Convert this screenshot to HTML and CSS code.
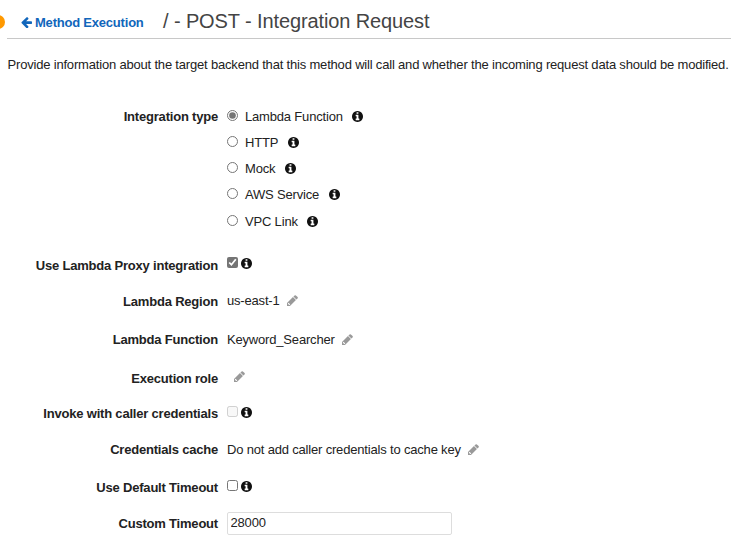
FILE: index.html
```html
<!DOCTYPE html>
<html lang="en">
<head>
<meta charset="utf-8">
<title>Integration Request</title>
<link rel="stylesheet" href="styles.css">
</head>
<body>
<svg class="defs" width="0" height="0">
  <symbol id="info" viewBox="128 128 1536 1536"><path d="M1152 1376v-160q0-14-9-23t-23-9h-96v-512q0-14-9-23t-23-9h-320q-14 0-23 9t-9 23v160q0 14 9 23t23 9h96v320h-96q-14 0-23 9t-9 23v160q0 14 9 23t23 9h448q14 0 23-9t9-23zm-128-896v-160q0-14-9-23t-23-9h-192q-14 0-23 9t-9 23v160q0 14 9 23t23 9h192q14 0 23-9t9-23zm640 416q0 209-103 385.5t-279.5 279.5-385.5 103-385.5-103-279.5-279.5-103-385.5 103-385.5 279.5-279.5 385.5-103 385.5 103 279.5 279.5 103 385.5z"/></symbol>
  <symbol id="pencil" viewBox="128 128 1536 1536"><path d="M491 1536l91-91-235-235-91 91v107h128v128h107zM960 416l416 416-832 832h-416v-416zm683 96q0 53-37 90l-166 166-416-416 166-165q36-38 90-38 53 0 91 38l235 234q37 39 37 91z"/></symbol>
  <symbol id="arrow" viewBox="128 192 1536 1480"><path d="M1664 896v128q0 53-32.5 90.5t-84.5 37.5h-704l293 294q38 36 38 90t-38 90l-75 76q-37 37-90 37-52 0-91-37l-651-652q-37-37-37-90 0-52 37-91l651-650q38-38 91-38 52 0 90 38l75 74q38 38 38 91t-38 91l-293 293h704q52 0 84.5 37.5t32.5 90.5z"/></symbol>
</svg>
<span class="dot"></span>
<header class="header">
  <a class="back"><svg class="arrow"><use href="#arrow"/></svg>Method Execution</a>
  <h1 class="title">/ - POST - Integration Request</h1>
</header>
<p class="intro">Provide information about the target backend that this method will call and whether the incoming request data should be modified.</p>
<form class="form">
  <div class="row row-type">
    <span class="label">Integration type</span>
    <div class="options">
      <label class="option"><input type="radio" name="type" checked><span>Lambda Function</span><svg class="info"><use href="#info"/></svg></label>
      <label class="option"><input type="radio" name="type"><span>HTTP</span><svg class="info"><use href="#info"/></svg></label>
      <label class="option"><input type="radio" name="type"><span>Mock</span><svg class="info"><use href="#info"/></svg></label>
      <label class="option"><input type="radio" name="type"><span>AWS Service</span><svg class="info"><use href="#info"/></svg></label>
      <label class="option option-last"><input type="radio" name="type"><span>VPC Link</span><svg class="info"><use href="#info"/></svg></label>
    </div>
  </div>
  <div class="row row-proxy">
    <span class="label">Use Lambda Proxy integration</span>
    <div class="value check"><input type="checkbox" checked><svg class="info"><use href="#info"/></svg></div>
  </div>
  <div class="row row-region">
    <span class="label">Lambda Region</span>
    <div class="value raised"><span>us-east-1</span><svg class="pencil"><use href="#pencil"/></svg></div>
  </div>
  <div class="row row-function">
    <span class="label">Lambda Function</span>
    <div class="value"><span>Keyword_Searcher</span><svg class="pencil"><use href="#pencil"/></svg></div>
  </div>
  <div class="row row-role">
    <span class="label">Execution role</span>
    <div class="value raised"><svg class="pencil"><use href="#pencil"/></svg></div>
  </div>
  <div class="row row-invoke">
    <span class="label">Invoke with caller credentials</span>
    <div class="value check"><input type="checkbox" disabled><svg class="info"><use href="#info"/></svg></div>
  </div>
  <div class="row row-cache">
    <span class="label">Credentials cache</span>
    <div class="value"><span>Do not add caller credentials to cache key</span><svg class="pencil"><use href="#pencil"/></svg></div>
  </div>
  <div class="row row-default">
    <span class="label">Use Default Timeout</span>
    <div class="value check"><input type="checkbox"><svg class="info"><use href="#info"/></svg></div>
  </div>
  <div class="row row-custom">
    <span class="label">Custom Timeout</span>
    <input class="text" type="text" value="28000">
  </div>
</form>
</body>
</html>
```
FILE: styles.css
```css
* { box-sizing: border-box; }
body {
  margin: 0;
  height: 549px;
  overflow: hidden;
  background: #fff;
  color: #222;
  font: 13px/18px "Liberation Sans", Arial, sans-serif;
  letter-spacing: -0.18px;
}
svg { fill: currentColor; flex: none; display: block; }
.defs { position: absolute; }
.dot {
  position: absolute;
  left: -9px;
  top: 15px;
  width: 14px;
  height: 14px;
  border-radius: 50%;
  background: #f90;
}
.header {
  display: flex;
  align-items: center;
  height: 39px;
  margin-left: 7px;
  padding-left: 14px;
  border-bottom: 1px solid #c8c8c8;
}
.back {
  display: flex;
  align-items: center;
  gap: 3px;
  width: 142px;
  padding-top: 7px;
  color: #1166bb;
  font-weight: bold;
  letter-spacing: -0.21px;
  white-space: nowrap;
}
.arrow { width: 11px; height: 11px; }
.title {
  margin: 3px 0 0;
  color: #444;
  font-size: 20px;
  line-height: 24px;
  font-weight: normal;
  letter-spacing: -0.11px;
  white-space: nowrap;
}
.intro { margin: 17px 0 0 7.5px; letter-spacing: -0.186px; white-space: nowrap; }
.form { margin-top: 34px; }
.row { display: flex; gap: 9px; height: 18px; }
.label {
  width: 218px;
  text-align: right;
  font-weight: bold;
  letter-spacing: -0.2px;
  white-space: nowrap;
}
.value { display: flex; align-items: center; gap: 7px; white-space: nowrap; }
.raised { margin-top: -1px; height: 18px; }
.check { gap: 3px; height: 18px; }
input[type="radio"], input[type="checkbox"] {
  width: 11px;
  height: 11px;
  margin: 0;
  accent-color: #757575;
}
.options { display: flex; flex-direction: column; gap: 8px; }
.option { display: flex; align-items: center; height: 18px; }
.option-last { margin-top: 1px; }
.option input { margin-right: 7px; margin-top: -3px; }
.option .info { margin: -1px 0 0 9.5px; }
.info { width: 11px; height: 11px; color: #111; }
.check input { margin-top: -2px; }
.pencil { width: 11px; height: 11px; margin-top: -2px; color: #999; }
.row-type { height: 123px; }
.row-proxy { margin-top: 26px; }
.row-region { margin-top: 18px; }
.row-function { margin-top: 20px; }
.row-role { margin-top: 21px; }
.row-role .pencil { margin-left: 7px; margin-top: -3px; }
.row-proxy .check { margin-top: -3px; }
.row-invoke { margin-top: 17px; }
.row-invoke .check, .row-default .check { margin-top: -2px; }
.row-cache { margin-top: 18px; }
.row-default { margin-top: 20px; }
.row-custom { margin-top: 18px; }
.text {
  width: 225px;
  height: 23px;
  margin-top: -3px;
  padding: 0 2.5px 2px;
  border: 1px solid #ddd;
  border-radius: 2px;
  background: #fff;
  color: #222;
  font: inherit;
  letter-spacing: -0.18px;
}
```
